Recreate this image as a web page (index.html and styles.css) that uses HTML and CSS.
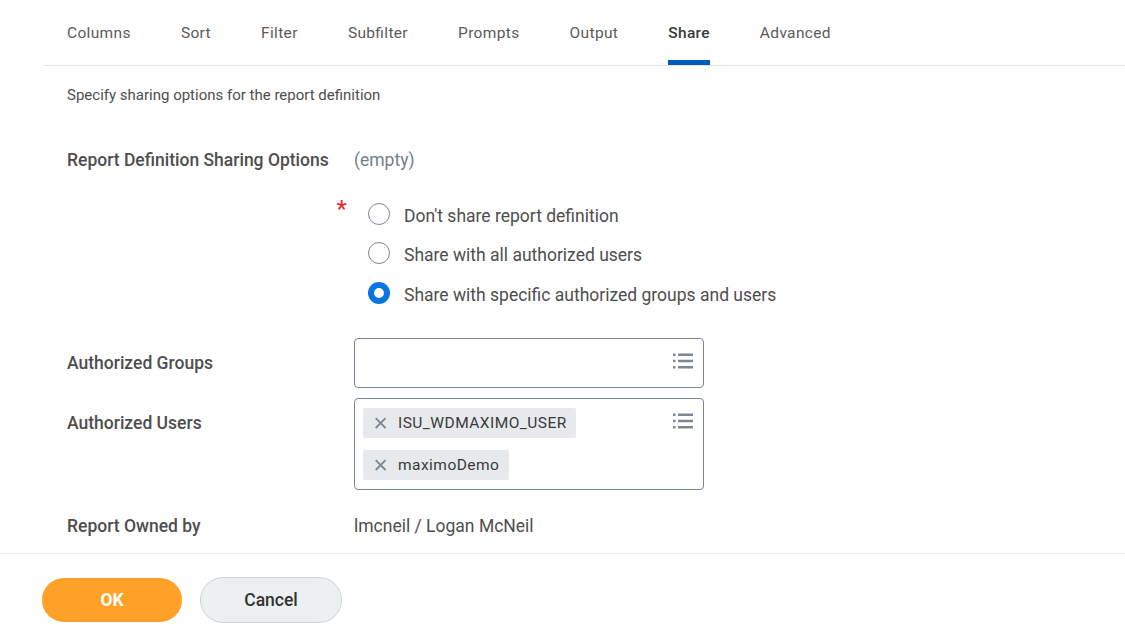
FILE: index.html
```html
<!DOCTYPE html>
<html lang="en">
<head>
<meta charset="utf-8">
<title>Share report</title>
<link rel="stylesheet" href="styles.css">
</head>
<body>
<main class="page">
  <nav class="tabs">
    <a class="tab">Columns</a><a class="tab">Sort</a><a class="tab">Filter</a><a class="tab">Subfilter</a><a class="tab">Prompts</a><a class="tab">Output</a><a class="tab tab-active">Share</a><a class="tab">Advanced</a>
  </nav>
  <form class="form">
    <p class="intro">Specify sharing options for the report definition</p>
    <div class="row row-options"><span class="label">Report Definition Sharing Options</span><span class="empty">(empty)</span></div>
    <div class="choices">
      <span class="required">*</span>
      <div class="radios">
        <label class="choice"><i class="radio"></i><span class="choice-text">Don't share report definition</span></label>
        <label class="choice"><i class="radio"></i><span class="choice-text">Share with all authorized users</span></label>
        <label class="choice"><i class="radio radio-on"></i><span class="choice-text">Share with specific authorized groups and users</span></label>
      </div>
    </div>
    <div class="row row-groups"><span class="label">Authorized Groups</span>
      <div class="field"><div class="chips"></div>
        <svg class="list-icon" viewBox="0 0 21 16"><path d="M0 .5h2.5v2.4H0zM5 .5h15v2.4H5zM0 6.8h2.5v2.4H0zM5 6.8h15v2.4H5zM0 13.1h2.5v2.4H0zM5 13.1h15v2.4H5z"/></svg>
      </div>
    </div>
    <div class="row row-users"><span class="label">Authorized Users</span>
      <div class="field field-users"><div class="chips">
        <span class="chip"><svg class="remove" viewBox="0 0 12 12"><path d="M.7 1.2l9.8 9.8M10.500 1.200L.7 11"/></svg><span class="chip-text">ISU_WDMAXIMO_USER</span></span>
        <span class="chip"><svg class="remove" viewBox="0 0 12 12"><path d="M.7 1.2l9.8 9.8M10.500 1.200L.7 11"/></svg><span class="chip-text">maximoDemo</span></span>
        </div>
        <svg class="list-icon" viewBox="0 0 21 16"><path d="M0 .5h2.5v2.4H0zM5 .5h15v2.4H5zM0 6.8h2.5v2.4H0zM5 6.8h15v2.4H5zM0 13.1h2.5v2.4H0zM5 13.1h15v2.4H5z"/></svg>
      </div>
    </div>
    <div class="row row-owner"><span class="label">Report Owned by</span><span class="value">lmcneil / Logan McNeil</span></div>
  </form>
  <footer class="footer"><button class="button ok">OK</button><button class="button cancel">Cancel</button></footer>
</main>
</body>
</html>
```
FILE: styles.css
```css
* { box-sizing: border-box; }
body { margin: 0; background: #fff; color: #4e4e4e; font-family: Roboto, "Liberation Sans", sans-serif; }
.page { display: flex; flex-direction: column; height: 625px; overflow: hidden; }
.tabs { display: flex; gap: 50.1px; height: 66px; margin-left: 42px; padding-left: 25px; border-bottom: 1px solid #e1e2e3; border-bottom-left-radius: 3px; }
.tab { height: 65px; line-height: 67px; font-size: 15.5px; letter-spacing: .34px; font-feature-settings: "liga" 1; white-space: nowrap; color: #5a5a5a; }
.tab-active { font-weight: 500; color: #3a3a3a; letter-spacing: .28px; border-bottom: 5px solid #005cb9; }
.form { height: 487px; padding-left: 67px; }
.intro { margin: 19px 0 0; height: 20px; font-size: 15px; line-height: 20px; }
.row { display: flex; font-size: 17.5px; line-height: 24px; }
.row-options { height: 24px; margin-top: 43px; }
.label { width: 287px; font-weight: 500; white-space: nowrap; }
.empty { color: #70808c; }
.choices { display: flex; height: 119px; margin: 22px 0 0 269.5px; }
.required { width: 31.5px; font-size: 24px; line-height: 30px; color: #f01f2c; }
.choice { display: flex; align-items: center; gap: 14px; height: 39.5px; font-size: 17.5px; }
.choice-text { padding-top: 4px; }
.radio { width: 22px; height: 22px; border: 1px solid #7b8794; border-radius: 50%; }
.radio-on { border: 6px solid #0875e1; }
.row-groups { margin-top: 25px; }
.row-groups .label, .row-users .label { padding-top: 13px; }
.field { display: flex; justify-content: space-between; width: 350px; height: 50px; border: 1px solid #7b8794; border-radius: 4px; padding: 9px 9px 0 8px; }
.field-users { height: 92px; }
.list-icon { width: 21px; height: 16px; margin-top: 5px; fill: #7b8794; }
.row-users { margin-top: 10px; }
.chips { display: flex; flex-direction: column; align-items: flex-start; gap: 12px; }
.chip { display: flex; align-items: center; gap: 11px; height: 30px; padding: 0 9.4px 0 12px; background: #e7eaec; border-radius: 2px; font-size: 15.5px; letter-spacing: .46px; color: #3a3a3a; }
.chip-text { line-height: 18px; }
.remove { width: 12px; height: 12px; stroke: #7b8794; stroke-width: 1.8; }
.row-owner { margin-top: 24px; }
.footer { display: flex; align-items: center; gap: 18px; height: 72px; padding: 20px 0 0 42px; border-top: 1px solid #eceded; }
.button { font: 500 17.5px Roboto, "Liberation Sans", sans-serif; border: 0; }
.ok { width: 140px; height: 44px; border-radius: 22px; background: #ffa126; color: #fff; font-weight: 700; }
.cancel { width: 142px; height: 46px; border-radius: 23px; border: 1px solid #ced3d9; background: #edf0f1; color: #333; }
```
